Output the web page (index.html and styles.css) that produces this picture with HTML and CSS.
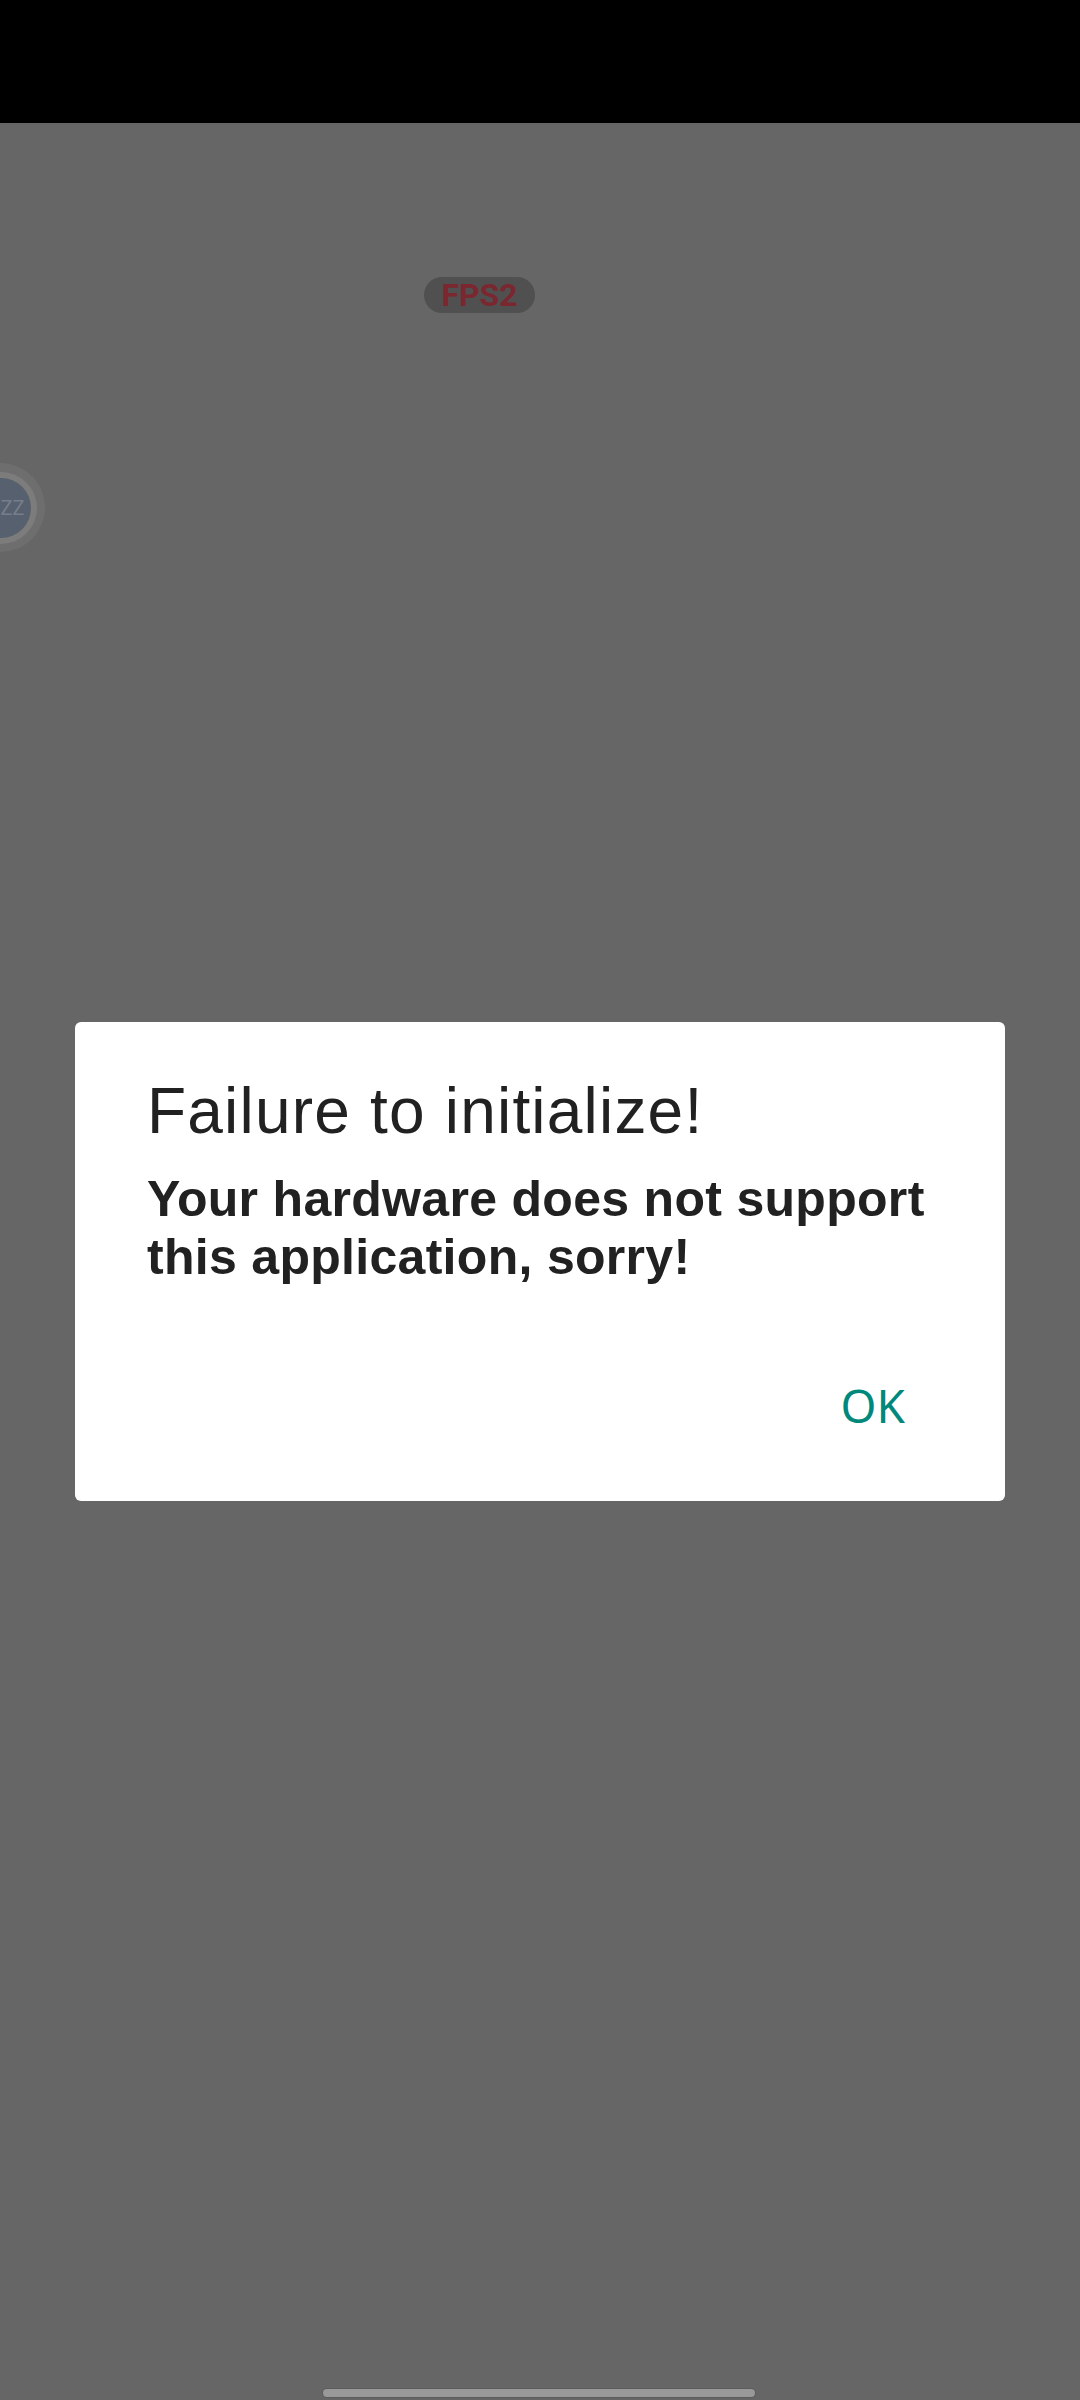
FILE: index.html
```html
<!DOCTYPE html>
<html>
<head>
    <title>Failure to initialize</title>
    <link rel="stylesheet" href="styles.css">
</head>
<body>
    <div class="status-bar"></div>
    <div class="screen">
        <div class="fps-row"><span class="fps-badge">FPS2</span></div>
        <div class="float-button">
            <div class="float-ring">
                <div class="float-inner">ZZ</div>
            </div>
        </div>
        <div class="dialog">
            <h2>Failure to initialize!</h2>
            <p>Your hardware does not support this application, sorry!</p>
            <div class="dialog-actions">
                <button type="button">OK</button>
            </div>
        </div>
        <div class="nav-handle"></div>
    </div>
</body>
</html>
```

FILE: styles.css
```css
body {
    margin: 0;
    padding: 0;
    width: 1080px;
    height: 2400px;
    overflow: hidden;
    background-color: #666666;
    font-family: "Liberation Sans", Arial, sans-serif;
}
.status-bar {
    height: 123px;
    background-color: #000000;
}
.screen {
    position: relative;
    height: 2277px;
}
.fps-row {
    display: flex;
    height: 36px;
    padding-top: 154px;
    padding-left: 424px;
}
.fps-badge {
    width: 111px;
    height: 36px;
    line-height: 36px;
    border-radius: 18px;
    background-color: #505050;
    color: #7a2730;
    font-family: Roboto, sans-serif;
    font-size: 32px;
    font-weight: bold;
    text-align: center;
}
.float-button {
    position: absolute;
    left: -44px;
    top: 340px;
    width: 89px;
    height: 89px;
    border-radius: 50%;
    background-color: #6e6e6e;
    display: flex;
    align-items: center;
    justify-content: center;
}
.float-ring {
    width: 72px;
    height: 72px;
    border-radius: 50%;
    background-color: #7c7c7c;
    display: flex;
    align-items: center;
    justify-content: center;
}
.float-inner {
    width: 60px;
    height: 60px;
    box-sizing: border-box;
    padding-left: 30px;
    border-radius: 50%;
    background-color: #56606e;
    color: #757e8b;
    font-family: Roboto, sans-serif;
    font-size: 20px;
    line-height: 60px;
    white-space: nowrap;
}
.dialog {
    width: 930px;
    height: 479px;
    box-sizing: border-box;
    margin-top: 709px;
    margin-left: 75px;
    padding: 54px 72px 0;
    background-color: #ffffff;
    border-radius: 6px;
    color: #212121;
}
.dialog h2 {
    margin: 0;
    font-size: 64px;
    line-height: 70px;
    font-weight: normal;
    letter-spacing: 1.2px;
}
.dialog p {
    margin: 24px 0 0;
    font-size: 50px;
    line-height: 58px;
    font-weight: bold;
    letter-spacing: 0.3px;
}
.dialog-actions {
    display: flex;
    justify-content: flex-end;
    margin-top: 89px;
}
.dialog-actions button {
    border: none;
    background: none;
    padding: 0;
    margin-right: 28px;
    color: #00897b;
    font-family: "Noto Sans", sans-serif;
    font-size: 46px;
    line-height: 60px;
}
.nav-handle {
    position: absolute;
    bottom: 3px;
    left: 323px;
    width: 432px;
    height: 8px;
    border-radius: 4px;
    background-color: #999999;
    box-shadow: 0 0 0 1px #5c5c5c;
}
```
